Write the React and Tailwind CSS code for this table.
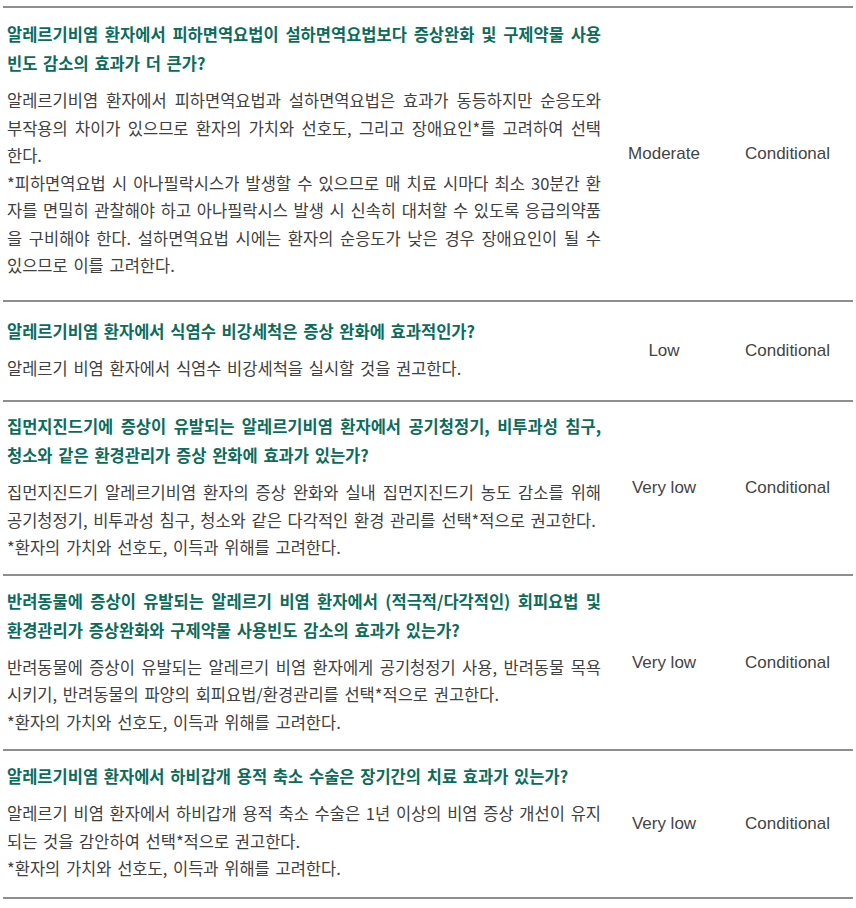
import React from 'react';

const rows = [
    {
        title: [
            '알레르기비염 환자에서 피하면역요법이 설하면역요법보다 증상완화 및 구제약물 사용',
            '빈도 감소의 효과가 더 큰가?',
        ],
        body: [
            [
                '알레르기비염 환자에서 피하면역요법과 설하면역요법은 효과가 동등하지만 순응도와',
                '부작용의 차이가 있으므로 환자의 가치와 선호도, 그리고 장애요인*를 고려하여 선택',
                '한다.',
            ],
            [
                '*피하면역요법 시 아나필락시스가 발생할 수 있으므로 매 치료 시마다 최소 30분간 환',
                '자를 면밀히 관찰해야 하고 아나필락시스 발생 시 신속히 대처할 수 있도록 응급의약품',
                '을 구비해야 한다. 설하면역요법 시에는 환자의 순응도가 낮은 경우 장애요인이 될 수',
                '있으므로 이를 고려한다.',
            ],
        ],
        level: 'Moderate',
        grade: 'Conditional',
        pad: 'pt-[12px] pb-[20px]',
    },
    {
        title: ['알레르기비염 환자에서 식염수 비강세척은 증상 완화에 효과적인가?'],
        body: [['알레르기 비염 환자에서 식염수 비강세척을 실시할 것을 권고한다.']],
        level: 'Low',
        grade: 'Conditional',
        pad: 'pt-[15px] pb-[18px]',
    },
    {
        title: [
            '집먼지진드기에 증상이 유발되는 알레르기비염 환자에서 공기청정기, 비투과성 침구,',
            '청소와 같은 환경관리가 증상 완화에 효과가 있는가?',
        ],
        body: [
            [
                '집먼지진드기 알레르기비염 환자의 증상 완화와 실내 집먼지진드기 농도 감소를 위해',
                '공기청정기, 비투과성 침구, 청소와 같은 다각적인 환경 관리를 선택*적으로 권고한다.',
            ],
            ['*환자의 가치와 선호도, 이득과 위해를 고려한다.'],
        ],
        level: 'Very low',
        grade: 'Conditional',
        pad: 'pt-[10px] pb-[12px]',
    },
    {
        title: [
            '반려동물에 증상이 유발되는 알레르기 비염 환자에서 (적극적/다각적인) 회피요법 및',
            '환경관리가 증상완화와 구제약물 사용빈도 감소의 효과가 있는가?',
        ],
        body: [
            [
                '반려동물에 증상이 유발되는 알레르기 비염 환자에게 공기청정기 사용, 반려동물 목욕',
                '시키기, 반려동물의 파양의 회피요법/환경관리를 선택*적으로 권고한다.',
            ],
            ['*환자의 가치와 선호도, 이득과 위해를 고려한다.'],
        ],
        level: 'Very low',
        grade: 'Conditional',
        pad: 'pt-[11px] pb-[13px]',
    },
    {
        title: ['알레르기비염 환자에서 하비갑개 용적 축소 수술은 장기간의 치료 효과가 있는가?'],
        body: [
            [
                '알레르기 비염 환자에서 하비갑개 용적 축소 수술은 1년 이상의 비염 증상 개선이 유지',
                '되는 것을 감안하여 선택*적으로 권고한다.',
            ],
            ['*환자의 가치와 선호도, 이득과 위해를 고려한다.'],
        ],
        level: 'Very low',
        grade: 'Conditional',
        pad: 'pt-[11px] pb-[14px]',
    },
];

// one block per printed line so the breaks match; full lines are justified,
// the closing line keeps natural width with slightly wider word gaps
const Lines = ({ lines, className }) => (
    <div className={className}>
        {lines.map((line, i) => (
            <div
                key={i}
                className={
                    i < lines.length - 1
                        ? 'text-justify [text-align-last:justify]'
                        : '[word-spacing:2px]'
                }
            >
                {line}
            </div>
        ))}
    </div>
);

const Row = ({ row }) => (
    <div className="flex items-center border-t-2 border-[#8e8e8e]">
        <div className={`w-[610px] shrink-0 pl-[4px] pr-[12px] ${row.pad}`}>
            <Lines
                lines={row.title}
                className="text-[16.5px] leading-[29px] font-bold text-[#0b6c5c]"
            />
            <div className="mt-[9px]">
                {row.body.map((para, i) => (
                    <Lines
                        key={i}
                        lines={para}
                        className="text-[16.5px] leading-[27.5px] text-[#404040]"
                    />
                ))}
            </div>
        </div>
        <div className="w-[102px] shrink-0 text-center text-[17px] text-[#444] font-['Liberation_Sans',Arial,sans-serif]">
            {row.level}
        </div>
        <div className="flex-1 pl-[7px] text-center text-[17px] text-[#444] font-['Liberation_Sans',Arial,sans-serif]">
            {row.grade}
        </div>
    </div>
);

export default function App() {
    return (
        <div className="min-h-[908px] bg-white pt-[6px] font-['Noto_Sans_CJK_KR','Noto_Sans',sans-serif]">
            <div className="ml-[3px] w-[850px] border-b-2 border-[#8e8e8e]">
                {rows.map((row, i) => (
                    <Row key={i} row={row} />
                ))}
            </div>
        </div>
    );
}
